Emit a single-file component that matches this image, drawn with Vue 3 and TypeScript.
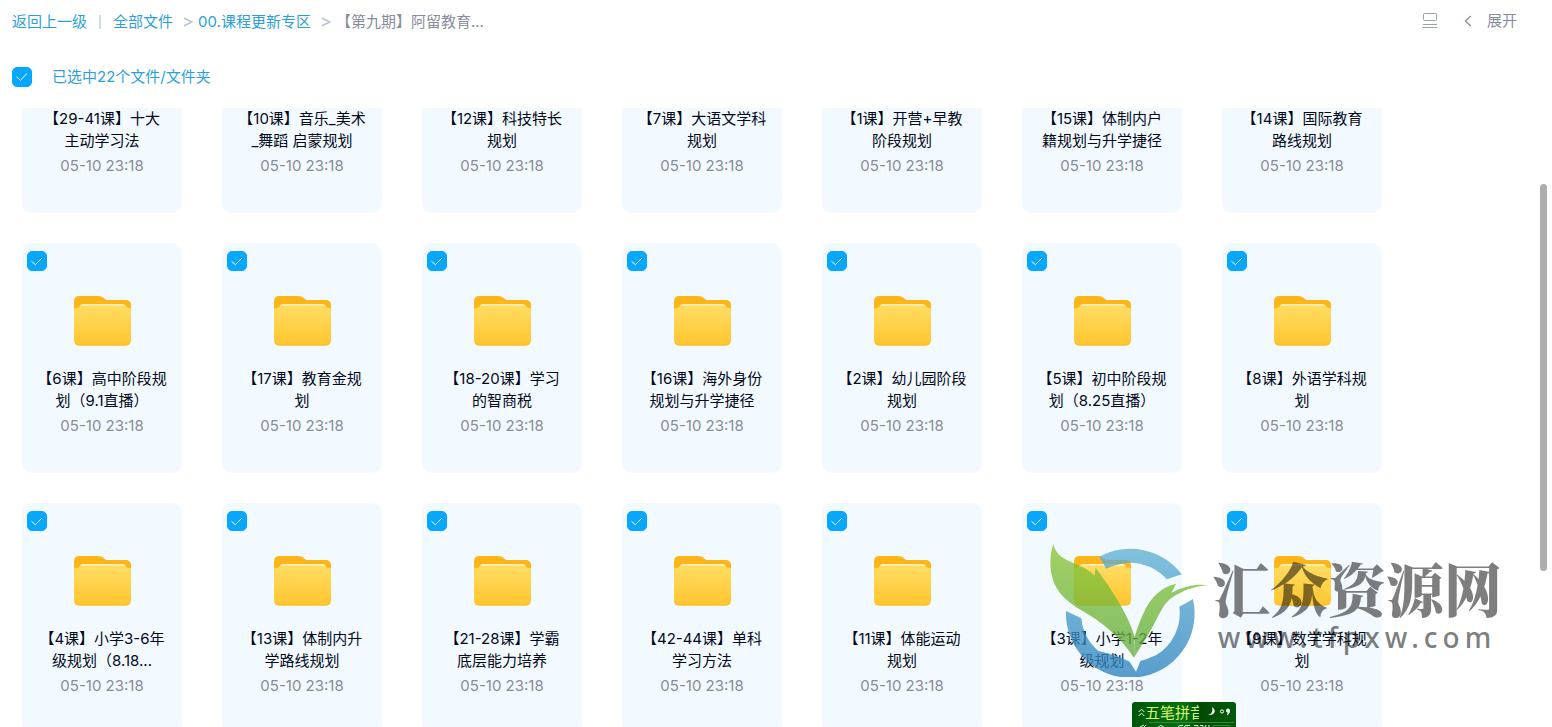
<script setup lang="ts">
import { onMounted, ref } from 'vue'

interface Folder {
  lines: string[]
  time: string
  checked: boolean
}

const names: string[][] = [
  ['【29-41课】十大', '主动学习法'],
  ['【10课】音乐_美术', '_舞蹈 启蒙规划'],
  ['【12课】科技特长', '规划'],
  ['【7课】大语文学科', '规划'],
  ['【1课】开营+早教', '阶段规划'],
  ['【15课】体制内户', '籍规划与升学捷径'],
  ['【14课】国际教育', '路线规划'],
  ['【6课】高中阶段规', '划（9.1直播）'],
  ['【17课】教育金规', '划'],
  ['【18-20课】学习', '的智商税'],
  ['【16课】海外身份', '规划与升学捷径'],
  ['【2课】幼儿园阶段', '规划'],
  ['【5课】初中阶段规', '划（8.25直播）'],
  ['【8课】外语学科规', '划'],
  ['【4课】小学3-6年', '级规划（8.18...'],
  ['【13课】体制内升', '学路线规划'],
  ['【21-28课】学霸', '底层能力培养'],
  ['【42-44课】单科', '学习方法'],
  ['【11课】体能运动', '规划'],
  ['【3课】小学1-2年', '级规划'],
  ['【9课】数学学科规', '划'],
]

const folders = ref<Folder[]>(names.map((lines) => ({ lines, time: '05-10 23:18', checked: true })))
const allChecked = ref(true)
const list = ref<HTMLElement | null>(null)

function toggleAll() {
  folders.value.forEach((f) => (f.checked = allChecked.value))
}

onMounted(() => {
  if (list.value) list.value.scrollTop = 125
})
</script>

<template>
  <div class="page">
    <header class="topbar">
      <nav class="crumbs" aria-label="路径">
        <a href="#">返回上一级</a>
        <span class="bar"></span>
        <a href="#">全部文件</a>
        <svg class="sep" viewBox="0 0 10 10"><path d="M1 1.2 9 5 1 8.8" /></svg>
        <a href="#">00.课程更新专区</a>
        <svg class="sep" viewBox="0 0 10 10"><path d="M1 1.2 9 5 1 8.8" /></svg>
        <span class="current">【第九期】阿留教育...</span>
      </nav>
      <div class="tools">
        <button type="button" class="icon-btn" aria-label="视图">
          <svg class="view" viewBox="0 0 16 16">
            <rect x="1.500" y=".5" width="13" height="7" rx="1" />
            <path d="M1 11.500h14M.5 14.500h15" />
          </svg>
        </button>
        <button type="button" class="expand">
          <svg class="chev" viewBox="0 0 8 12"><path d="M6.8 1 1.400 6l5.400 5" /></svg>
          展开
        </button>
      </div>
    </header>

    <label class="selectbar">
      <span class="box">
        <input v-model="allChecked" type="checkbox" @change="toggleAll" />
        <svg viewBox="0 0 20 20"><path d="M4.500 9.800 8.300 13.200 15 6.500" /></svg>
      </span>
      已选中22个文件/文件夹
    </label>

    <main class="body">
      <div ref="list" class="list">
        <svg class="defs" aria-hidden="true">
          <defs>
            <linearGradient id="front" x1="0" y1="0" x2="0" y2="1">
              <stop offset="0" stop-color="#ffdc62" />
              <stop offset="1" stop-color="#ffc52e" />
            </linearGradient>
            <linearGradient id="paper" x1="0" y1="0" x2="0" y2="1">
              <stop offset="0" stop-color="#fff0bd" />
              <stop offset="1" stop-color="#ffdd66" />
            </linearGradient>
          </defs>
        </svg>
        <article v-for="(f, i) in folders" :key="i" class="card">
          <span class="box corner">
            <input v-model="f.checked" type="checkbox" :aria-label="f.lines.join('')" />
            <svg viewBox="0 0 20 20"><path d="M4.500 10.300 8.300 13.700 15 7" /></svg>
          </span>
          <svg class="folder" viewBox="-2 0 60 50">
            <path fill="#fdb517" d="M0 5.500Q0 0 5.500 0H24Q27 0 29 1.500L31.500 3.500Q32.500 4 34 4H51.500Q57 4 57 9.500V20H0Z" />
            <path fill="url(#paper)" d="M5.500 11Q6 8 9 8H48.500Q51.500 8 52 11L54 20H4Z" />
            <path fill="url(#front)" d="M0 13Q0 12 2 12 5 12 6 9.800H51.500Q52.500 12 55 12 57 12 57 13V44Q57 49.500 51.500 49.500H5.500Q0 49.500 0 44Z" />
            <path fill="none" stroke="#f9bd2c" d="M.8 46Q2 49 5.500 49H51.500Q55 49 56.200 46" />
          </svg>
          <h2 class="name"><span v-for="line in f.lines" :key="line">{{ line }}</span></h2>
          <time class="time">{{ f.time }}</time>
        </article>
      </div>
      <span class="thumb"></span>
    </main>

    <div class="watermark">
      <svg class="logo" viewBox="60 33 480 405">
        <defs>
          <linearGradient id="ring" x1="0" y1="53" x2="0" y2="438" gradientUnits="userSpaceOnUse">
            <stop offset="0" stop-color="#62b2d3" />
            <stop offset="1" stop-color="#2f83bf" />
          </linearGradient>
          <linearGradient id="leaf" x1="0" y1="38" x2="0" y2="380" gradientUnits="userSpaceOnUse">
            <stop offset="0" stop-color="#8ac636" />
            <stop offset="1" stop-color="#64ad3e" />
          </linearGradient>
        </defs>
        <g fill="url(#ring)">
          <path d="M207 78A193 193 0 0 1 455 130L411 145A148 148 0 0 0 246 106L228 113Q220 94 207 78Z" />
          <path d="M489 204A193 193 0 1 1 108 240L154 262A148 148 0 0 0 205 360Q262 372 299 392L318 422 331 390Q350 385 378 373A148 148 0 0 0 448 227Z" />
        </g>
        <g fill="url(#leaf)">
          <path d="M70 38C58 75 59 115 68 144C79 181 108 211 154 238C220 276 270 318 312 380L314 318C299 265 269 217 234 162L197 110 193 134C169 107 133 101 101 82C82 69 74 57 70 38Z" />
          <path d="M535 163C499 158 467 164 425 185L438 158C392 169 366 198 348 231C332 263 322 290 314 318L312 380C337 338 357 310 376 272C392 240 403 214 430 197C460 179 491 166 535 163Z" />
        </g>
      </svg>
      <div class="words">
        <strong>汇众资源网</strong>
        <span>www.tfpxw.com</span>
      </div>
    </div>

    <div class="ime">
      <div class="ime-row">
        <svg class="up" viewBox="0 0 7 9"><path d="M.7 4 3.500 1.200 6.300 4M.7 8 3.500 5.200 6.300 8" /></svg>
        <span class="ime-name">五笔拼音</span>
        <svg class="marks" viewBox="0 0 24 12">
          <path fill="#fff" d="M5 1C10 4 8 10 1 9 5 8 6 5 5 1Z" />
          <circle cx="15" cy="5.500" r="1.600" fill="none" stroke="#fff" />
          <path fill="#fff" d="M19 4.500a2 2 0 1 1 4 0Q23 8 19.500 9.500 21 7.500 20.500 6.500 19 6.200 19 4.500Z" />
        </svg>
      </div>
      <svg class="ime-next" viewBox="0 0 104 6">
        <path d="M17 .5H102" stroke="#2f8a35" />
        <path d="M8 5 12 3M12 5 14 3M26 5.500Q29 1.500 32 5.500M46 5 48 3.500H51M52 5 54 3.500H58M62 3.500H66V6M68 3.500H71V6M74 3 73 6M77 3V6" stroke="#e4ffe4" fill="none" />
        <path d="M81 6V3.500H98V6" stroke="#2f8a35" fill="none" />
      </svg>
    </div>
  </div>
</template>

<style>
body {
  margin: 0;
  background: #fff;
}
</style>

<style scoped>
.page {
  position: relative;
  display: flex;
  flex-direction: column;
  height: 100vh;
  overflow: hidden;
  font: 15px/22px Inter, "Noto Sans CJK SC", sans-serif;
  color: #03081a;
}
.topbar {
  display: flex;
  align-items: center;
  justify-content: space-between;
  height: 44px;
  padding: 0 35px 0 12px;
}
.crumbs {
  display: flex;
  align-items: center;
}
.crumbs a {
  color: #2b9fdc;
  text-decoration: none;
}
.bar {
  width: 2px;
  height: 14px;
  margin: 0 12px;
  background: #c5dfee;
}
.sep {
  width: 10px;
  height: 10px;
  margin: 0 5px 0 10px;
  fill: none;
  stroke: #b4c3d4;
  stroke-width: 1.5;
}
.current {
  color: #878c9c;
}
.tools {
  display: flex;
  align-items: center;
  gap: 26px;
  height: 42px;
  align-self: flex-start;
}
button {
  padding: 0;
  border: 0;
  background: none;
  font: inherit;
  color: #878c9c;
  cursor: pointer;
}
.icon-btn {
  display: flex;
}
.view {
  width: 16px;
  height: 16px;
  fill: none;
  stroke: #9a9fab;
}
.expand {
  display: flex;
  align-items: center;
  gap: 15px;
}
.chev {
  width: 8px;
  height: 12px;
  fill: none;
  stroke: #80869a;
  stroke-width: 1.2;
}
.selectbar {
  display: flex;
  align-items: center;
  gap: 20px;
  height: 62px;
  padding: 2px 0 0 12px;
  color: #2b9fdc;
}
.box {
  position: relative;
  display: block;
  width: 20px;
  height: 20px;
}
.box input {
  display: block;
  appearance: none;
  width: 20px;
  height: 20px;
  margin: 0;
  border: 1px solid #c4c8d0;
  border-radius: 5px;
}
.box input:checked {
  border-color: #06a7ff;
  background: #06a7ff;
}
.box svg {
  position: absolute;
  inset: 0;
  fill: none;
  stroke: #fff;
  pointer-events: none;
}
.body {
  position: relative;
  flex: 1;
  min-height: 0;
}
.list {
  display: grid;
  grid-template-columns: repeat(auto-fill, 160px);
  grid-auto-rows: 230px;
  gap: 30px 40px;
  box-sizing: border-box;
  height: 100%;
  padding: 0 22px 30px;
  overflow-y: auto;
  scrollbar-width: none;
}
.defs {
  position: absolute;
  width: 0;
  height: 0;
}
.card {
  position: relative;
  display: flex;
  flex-direction: column;
  align-items: center;
  box-sizing: border-box;
  padding-top: 53px;
  border-radius: 10px;
  background: #f2faff;
}
.corner {
  position: absolute;
  top: 8px;
  left: 5px;
}
.folder {
  width: 60px;
  height: 50px;
}
.name {
  margin: 22px 0 0;
  font-size: 15px;
  font-weight: 400;
  text-align: center;
  white-space: nowrap;
}
.name span {
  display: block;
}
.time {
  margin-top: 3px;
  color: #878c9c;
}
.thumb {
  position: absolute;
  top: 12.3%;
  right: 5px;
  width: 7px;
  height: 62.5%;
  border-radius: 4px;
  background: #adadad;
}
.watermark {
  position: absolute;
  right: 50px;
  bottom: 50px;
  display: flex;
  align-items: flex-start;
  gap: 2px;
  pointer-events: none;
}
.logo {
  width: 160px;
  height: 135px;
  opacity: 0.78;
}
.words {
  display: flex;
  flex-direction: column;
  align-items: center;
  padding-top: 15px;
  color: #000;
  opacity: 0.5;
}
.words strong {
  font: 900 58px/60px "Noto Serif CJK SC", "Noto Sans CJK SC", serif;
}
.words span {
  font: 500 28px/40px "Noto Sans", sans-serif;
  letter-spacing: 5px;
}
.ime {
  position: absolute;
  right: 316px;
  bottom: 0;
  width: 104px;
  height: 25px;
  overflow: hidden;
  border-radius: 3px 3px 0 0;
  background: linear-gradient(90deg, #00560a, #067212 50%, #004b05 66%, #005a08);
}
.ime-row {
  display: flex;
  align-items: center;
  height: 20px;
  padding-left: 6px;
}
.up {
  width: 7px;
  height: 9px;
  fill: none;
  stroke: #e4ffe4;
}
.ime-name {
  width: 54px;
  overflow: hidden;
  font: 15px/20px "Noto Sans CJK SC", sans-serif;
  color: #d5f56e;
  white-space: nowrap;
}
.marks {
  width: 24px;
  height: 12px;
  margin-left: 8px;
}
.ime-next {
  display: block;
  width: 104px;
  height: 6px;
}
</style>
